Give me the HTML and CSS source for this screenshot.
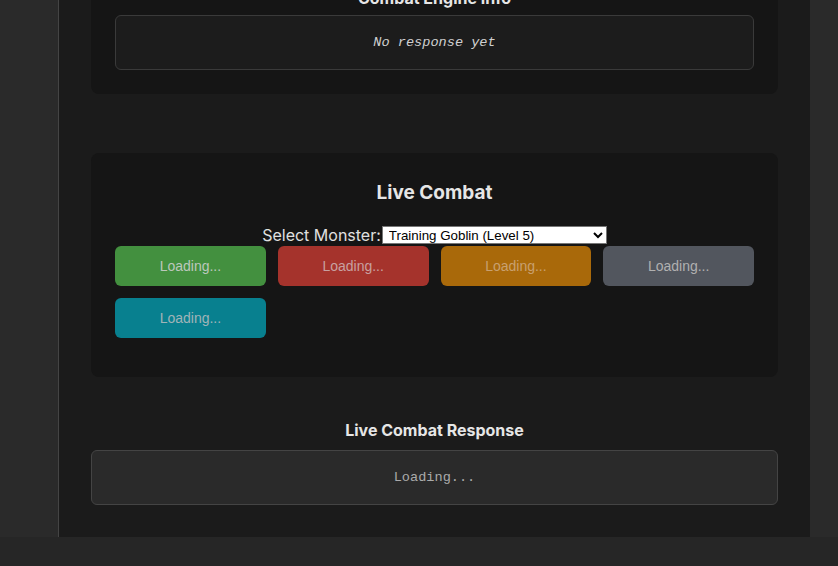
FILE: index.html
```html
<!DOCTYPE html>
<html>
<head>
<meta charset="utf-8">
<link rel="stylesheet" href="styles.css">
</head>
<body>
<div class="layout">
  <main class="panel">
    <section class="card card-info">
      <h3 class="card-title">Combat Engine Info</h3>
      <div class="info-box">No response yet</div>
    </section>

    <section class="card card-live">
      <h2 class="live-title">Live Combat</h2>
      <div class="monster-row">
        <label class="monster-label" for="monster">Select Monster:</label>
        <select id="monster" class="monster-select">
          <option>Training Goblin (Level 5)</option>
        </select>
      </div>
      <div class="action-grid">
        <button class="action action-green" disabled>Loading...</button>
        <button class="action action-red" disabled>Loading...</button>
        <button class="action action-orange" disabled>Loading...</button>
        <button class="action action-gray" disabled>Loading...</button>
        <button class="action action-teal" disabled>Loading...</button>
      </div>
    </section>

    <section class="response">
      <h3 class="response-title">Live Combat Response</h3>
      <div class="response-box">Loading...</div>
    </section>
  </main>
</div>
</body>
</html>
```

FILE: styles.css
```css
html, body {
  margin: 0;
  padding: 0;
}

body {
  background: #262626;
  font-family: Inter, "Noto Sans", sans-serif;
  color: #e0e0e0;
  overflow: hidden;
}

.layout {
  background: #2a2a2a;
  display: flex;
}

.panel {
  margin-left: 58px;
  width: 752px;
  border-left: 1px solid #444;
  background: #1b1b1b;
  padding: 0 32px 32px;
  box-sizing: border-box;
  margin-top: -40px;
}

.card {
  background: #151515;
  border-radius: 8px;
  padding: 0 24px;
}

.card-info {
  padding-top: 28px;
  padding-bottom: 24px;
}

.card-title {
  margin: 0 0 7px;
  font-size: 16px;
  line-height: 20px;
  font-weight: 700;
  text-align: center;
  color: #e6e6e6;
}

.info-box {
  height: 55px;
  box-sizing: border-box;
  border: 1px solid #3a3a3a;
  border-radius: 6px;
  background: #1c1c1c;
  display: flex;
  align-items: center;
  justify-content: center;
  padding-bottom: 1px;
  font-family: "Liberation Mono", monospace;
  font-style: italic;
  font-size: 13.6px;
  color: #d0d0d0;
}

.card-live {
  margin-top: 59px;
  padding-top: 29px;
  padding-bottom: 39px;
}

.live-title {
  margin: 0;
  font-size: 19px;
  line-height: 22px;
  font-weight: 700;
  text-align: center;
  color: #e6e6e6;
}

.monster-row {
  display: flex;
  justify-content: center;
  align-items: center;
  height: 18px;
  margin: 22px 0 2px;
}

.monster-label {
  font-size: 16px;
  color: #e0e0e0;
}

.monster-select {
  width: 225px;
  height: 18px;
  margin: 0 0 0 1px;
  padding: 0 0 0 2px;
  background: #fff;
  color: #000;
  border: 1px solid #767676;
  border-radius: 0;
  font-family: "Liberation Sans", Arial, sans-serif;
  font-size: 13.33px;
  box-sizing: border-box;
}

.action-grid {
  display: grid;
  grid-template-columns: repeat(4, 1fr);
  gap: 12px;
}

.action {
  height: 40px;
  border: none;
  border-radius: 6px;
  font-family: "Liberation Sans", Arial, sans-serif;
  font-size: 14px;
  padding: 0;
}

.action-green { background: #43903f; color: #bcc8bc; }
.action-red { background: #a5332c; color: #c8a0a0; }
.action-orange { background: #a9690a; color: #c8a070; }
.action-gray { background: #52565e; color: #b0b0b0; }
.action-teal { background: #08808f; color: #a0b4b8; }

.response {
  margin-top: 43px;
}

.response-title {
  margin: 0 0 10px;
  font-size: 16px;
  line-height: 20px;
  font-weight: 700;
  text-align: center;
  color: #e6e6e6;
}

.response-box {
  height: 55px;
  box-sizing: border-box;
  border: 1px solid #444;
  border-radius: 6px;
  background: #2a2a2a;
  display: flex;
  align-items: center;
  justify-content: center;
  font-family: "Liberation Mono", monospace;
  font-size: 13.6px;
  color: #aaaaaa;
}
```
